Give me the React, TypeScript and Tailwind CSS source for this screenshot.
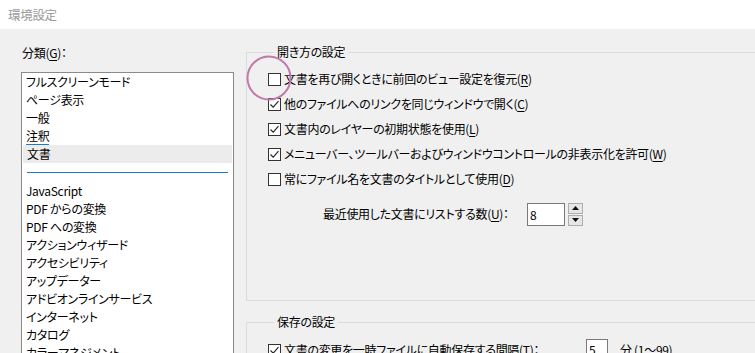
import React from "react";

const categories = [
  "フルスクリーンモード",
  "ページ表示",
  "一般",
  "注釈",
  "文書",
];

const moreCategories = [
  "JavaScript",
  "PDF からの変換",
  "PDF への変換",
  "アクションウィザード",
  "アクセシビリティ",
  "アップデーター",
  "アドビオンラインサービス",
  "インターネット",
  "カタログ",
  "カラーマネジメント",
];

const openOptions = [
  { text: "文書を再び開くときに前回のビュー設定を復元", key: "R", checked: false },
  { text: "他のファイルへのリンクを同じウィンドウで開く", key: "C", checked: true },
  { text: "文書内のレイヤーの初期状態を使用", key: "L", checked: true },
  { text: "メニューバー、ツールバーおよびウィンドウコントロールの非表示化を許可", key: "W", checked: true },
  { text: "常にファイル名を文書のタイトルとして使用", key: "D", checked: false },
];

function Checkbox({ checked }: { checked: boolean }) {
  return (
    <span className="w-[13px] h-[13px] border border-[#333] bg-white flex items-center justify-center shrink-0">
      {checked && (
        <svg width="11" height="11" viewBox="0 0 11 11">
          <path d="M1.5 5.5 L4.2 8.2 L9.5 2.2" fill="none" stroke="#222" strokeWidth="1.1" />
        </svg>
      )}
    </span>
  );
}

function Mnemonic({ k }: { k: string }) {
  return (
    <span>
      (<span className="underline underline-offset-2">{k}</span>)
    </span>
  );
}

export default function App() {
  return (
    <div
      className="w-[755px] h-[353px] overflow-hidden bg-[#f0f0f0] text-[12px] leading-[18px] tracking-[-0.3px] text-black [font-feature-settings:'palt']"
      style={{ fontFamily: '"Noto Sans CJK JP", "Noto Sans", sans-serif' }}
    >
      <div className="h-[29px] bg-white pl-[8px] flex items-center text-[#9a9a9a] text-[12.5px]">
        環境設定
      </div>

      <div className="flex">
        {/* left column */}
        <div className="pl-[21px] w-[246px] shrink-0">
          <div className="pt-[15px] h-[43px] pl-[1px]">
            分類<Mnemonic k="G" />：
          </div>
          <div className="w-[213px] h-[300px] bg-white border border-[#8a8a8a] border-b-0">
            {categories.map((c) => (
              <div
                key={c}
                className={
                  c === "文書"
                    ? "h-[18px] pl-[4px] bg-[#ececec] mx-[1px]"
                    : "h-[18px] pl-[4px]"
                }
              >
                {c === "注釈" ? (
                  <span className="border-b border-[#1979ca]">{c}</span>
                ) : (
                  c
                )}
              </div>
            ))}
            <div className="h-[19px] flex items-center px-[5px]">
              <div className="h-px w-full bg-[#1979ca]" />
            </div>
            {moreCategories.map((c) => (
              <div key={c} className="h-[18px] pl-[4px] whitespace-nowrap">
                {c}
              </div>
            ))}
          </div>
        </div>

        {/* right column */}
        <div className="flex flex-col shrink-0 pt-[15px]">
          <fieldset className="w-[540px] h-[257px] border border-[#dcdcdc] pl-[21px] m-0">
            <legend className="ml-[6px] px-[3px] leading-[16px]">開き方の設定</legend>
            <div className="flex flex-col gap-[7px] pt-[10px]">
              {openOptions.map((o) => (
                <div key={o.key} className="flex items-center gap-[3px] h-[18px] whitespace-nowrap">
                  <Checkbox checked={o.checked} />
                  <span>
                    {o.text}
                    <Mnemonic k={o.key} />
                  </span>
                </div>
              ))}
            </div>
            <div className="flex items-center mt-[14px] pl-[55px] h-[24px]">
              <span className="whitespace-nowrap w-[204px]">
                最近使用した文書にリストする数<Mnemonic k="U" />：
              </span>
              <div className="w-[38px] h-[23px] bg-white border border-[#7a7a7a] pl-[2px] leading-[21px]">
                8
              </div>
              <div className="ml-[3px] w-[15px] h-[23px] flex flex-col gap-px">
                <div className="flex-1 border border-[#adadad] bg-[#e6e6e6] flex items-center justify-center">
                  <svg width="7" height="4" viewBox="0 0 7 4">
                    <path d="M0 4 L3.5 0 L7 4 Z" fill="#111" />
                  </svg>
                </div>
                <div className="flex-1 border border-[#adadad] bg-[#e6e6e6] flex items-center justify-center">
                  <svg width="7" height="4" viewBox="0 0 7 4">
                    <path d="M0 0 L3.5 4 L7 0 Z" fill="#111" />
                  </svg>
                </div>
              </div>
            </div>
          </fieldset>

          <fieldset className="w-[540px] h-[60px] border border-[#dcdcdc] pl-[21px] m-0 mt-[13px]">
            <legend className="ml-[6px] px-[3px] leading-[16px]">保存の設定</legend>
            <div className="flex items-center h-[22px] mt-[9px] whitespace-nowrap">
              <Checkbox checked={true} />
              <span className="ml-[3px] w-[302px]">
                文書の変更を一時ファイルに自動保存する間隔<Mnemonic k="T" />：
              </span>
              <div className="w-[22px] h-[22px] bg-white border border-[#7a7a7a] pl-[2px] leading-[20px]">
                5
              </div>
              <span className="ml-[12px]">分 (1～99)</span>
            </div>
          </fieldset>
        </div>
      </div>

      {/* highlight circle drawn on top */}
      <svg className="absolute left-[246px] top-[55px] pointer-events-none" width="48" height="48" viewBox="0 0 48 48">
        <circle cx="23" cy="23" r="21.5" fill="none" stroke="#c27aa9" strokeWidth="2" />
      </svg>
    </div>
  );
}
